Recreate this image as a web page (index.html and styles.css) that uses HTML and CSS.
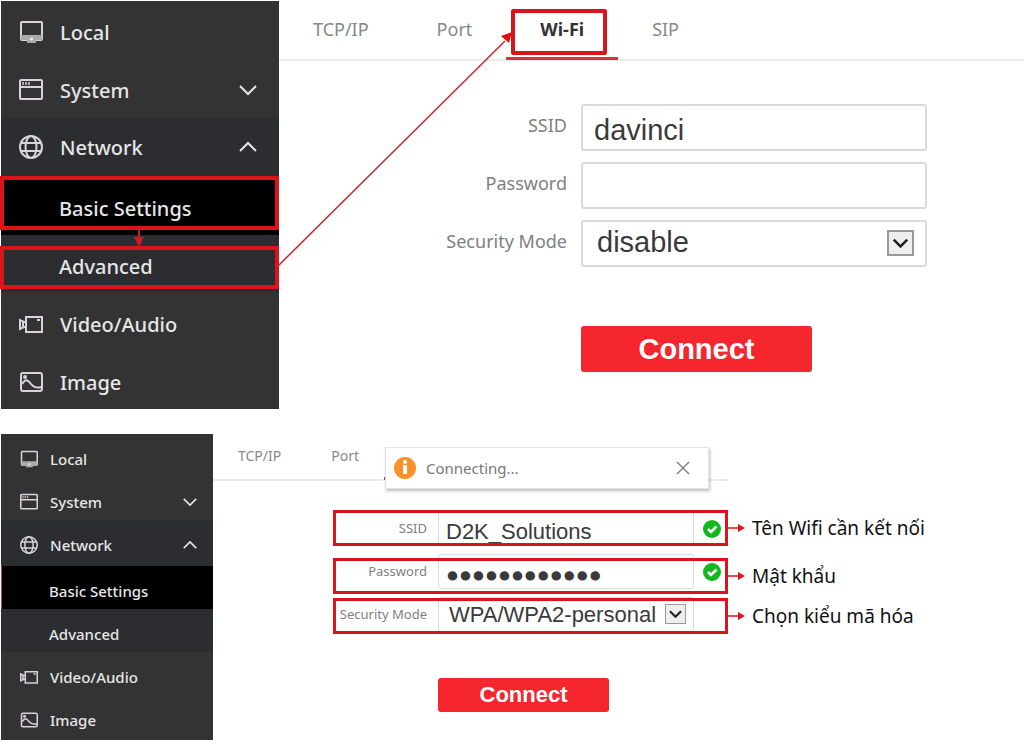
FILE: index.html
```
<!DOCTYPE html>
<html lang="vi">
<head>
    <meta charset="UTF-8">
    <title>Wi-Fi</title>
    <link rel="stylesheet" href="styles.css">
</head>
<body>
<svg class="sprite" aria-hidden="true">
    <symbol id="local" viewBox="0 0 24 24">
        <rect x="2" y="2" width="21" height="18" rx="1" fill="none" stroke="currentColor" stroke-width="2"/>
        <path d="M2 15h21v5H2zM8 20h9v3H8z" fill="#aaa"/>
        <circle cx="12.500" cy="19" r="1.500" fill="#eee"/>
    </symbol>
    <symbol id="system" viewBox="0 0 24 24">
        <rect x="1" y="2" width="22" height="19" rx="1" fill="none" stroke="currentColor" stroke-width="2"/>
        <path d="M1 9h22" stroke="currentColor" stroke-width="2"/>
        <path d="M3 5.500h8" stroke="#aaa" stroke-width="3" stroke-dasharray="2 1"/>
    </symbol>
    <symbol id="network" viewBox="0 0 24 24">
        <g fill="none" stroke="currentColor" stroke-width="2">
            <circle cx="12" cy="12" r="11"/>
            <ellipse cx="12" cy="12" rx="5.500" ry="11"/>
            <path d="M2 8h20M2 16h20"/>
        </g>
    </symbol>
    <symbol id="video" viewBox="0 0 24 24">
        <g fill="none" stroke="currentColor" stroke-width="2">
            <rect x="7" y="5" width="16" height="15"/>
            <path d="M7 10H5L1 8v9l4-2h2M4 9v7"/>
            <path d="M18 8h3"/>
        </g>
    </symbol>
    <symbol id="image" viewBox="0 0 24 24">
        <g fill="none" stroke="currentColor" stroke-width="2">
            <rect x="2" y="3" width="21" height="18" rx="2"/>
            <path d="M3 14c4-6 6-4 9 0s7 4 11 3"/>
            <circle cx="6" cy="7" r="1"/>
        </g>
    </symbol>
    <symbol id="down" viewBox="0 0 18 18">
        <path d="M1 5l8 8 8-8" fill="none" stroke="currentColor" stroke-width="2"/>
    </symbol>
    <symbol id="up" viewBox="0 0 18 18">
        <path d="M1 13l8-8 8 8" fill="none" stroke="currentColor" stroke-width="2"/>
    </symbol>
    <symbol id="drop" viewBox="0 0 26 26">
        <path d="M5 9l8 8 8-8" fill="none" stroke="#222" stroke-width="3"/>
    </symbol>
    <symbol id="ok" viewBox="0 0 18 18">
        <circle cx="9" cy="9" r="9" fill="#14b81c"/>
        <path d="M5 9l3 3 5.500-5.500" fill="none" stroke="#fff" stroke-width="2.600"/>
    </symbol>
    <symbol id="arrow" viewBox="0 0 18 10">
        <path d="M0 5h12" stroke="#d9141a" stroke-width="1.500"/>
        <path d="M11 1l7 4-7 4z" fill="#d9141a"/>
    </symbol>
</svg>

<section class="screen">
    <nav class="menu">
        <a class="item" href="#"><svg class="icon"><use href="#local"/></svg>Local</a>
        <a class="item" href="#"><svg class="icon"><use href="#system"/></svg>System<svg class="chevron"><use href="#down"/></svg></a>
        <a class="item open" href="#"><svg class="icon"><use href="#network"/></svg>Network<svg class="chevron"><use href="#up"/></svg></a>
        <a class="item sub select" href="#">Basic Settings<span class="mark mark-basic"></span></a>
        <a class="item sub" href="#">Advanced<span class="mark mark-advanced"></span></a>
        <a class="item" href="#"><svg class="icon"><use href="#video"/></svg>Video/Audio</a>
        <a class="item" href="#"><svg class="icon"><use href="#image"/></svg>Image</a>
    </nav>
    <div class="content">
        <div class="tabs">
            <a class="tab" href="#">TCP/IP</a>
            <a class="tab" href="#">Port</a>
            <a class="tab select" href="#">Wi-Fi<span class="mark mark-tab"></span></a>
            <a class="tab" href="#">SIP</a>
        </div>
        <form class="form">
            <div class="row">
                <label for="ssid">SSID</label>
                <input class="field" id="ssid" type="text" value="davinci">
            </div>
            <div class="row">
                <label for="password">Password</label>
                <input class="field" id="password" type="password">
            </div>
            <div class="row">
                <label for="mode">Security Mode</label>
                <div class="select-box">
                    <select class="field" id="mode"><option>disable</option></select>
                    <svg class="drop"><use href="#drop"/></svg>
                </div>
            </div>
            <button class="connect" type="button">Connect</button>
        </form>
    </div>
    <!-- arrows between the marked steps -->
    <svg class="steps" width="520" height="280" viewBox="0 0 520 280" aria-hidden="true">
        <path d="M138 229v10" stroke="#d9141a" stroke-width="2"/>
        <path d="M133 236h10l-5 10z" fill="#d9141a"/>
        <path d="M277 265L504 40" stroke="#c4282c" stroke-width="1.500"/>
        <path d="M511 31l-3 11-8-7z" fill="#e01014"/>
    </svg>
</section>

<section class="screen small">
    <nav class="menu">
        <a class="item" href="#"><svg class="icon"><use href="#local"/></svg>Local</a>
        <a class="item" href="#"><svg class="icon"><use href="#system"/></svg>System<svg class="chevron"><use href="#down"/></svg></a>
        <a class="item open" href="#"><svg class="icon"><use href="#network"/></svg>Network<svg class="chevron"><use href="#up"/></svg></a>
        <a class="item sub select" href="#">Basic Settings</a>
        <a class="item sub" href="#">Advanced</a>
        <a class="item" href="#"><svg class="icon"><use href="#video"/></svg>Video/Audio</a>
        <a class="item" href="#"><svg class="icon"><use href="#image"/></svg>Image</a>
    </nav>
    <div class="content">
        <div class="tabs">
            <a class="tab" href="#">TCP/IP</a>
            <a class="tab" href="#">Port</a>
            <span class="tab select empty"></span>
        </div>
        <div class="toast" role="status">
            <svg class="info" viewBox="0 0 22 22">
                <circle cx="11" cy="11" r="11" fill="#fb9128"/>
                <path d="M9 8h4v9H9z" fill="#fff"/>
                <circle cx="11" cy="5" r="2" fill="#fff"/>
            </svg>
            <span>Connecting...</span>
            <button class="close" type="button" aria-label="Close">
                <svg viewBox="0 0 14 14"><path d="M1 1l12 12M13 1L1 13" stroke="#777" stroke-width="1.300"/></svg>
            </button>
        </div>
        <form class="form">
            <div class="row">
                <label for="ssid2">SSID</label>
                <input class="field" id="ssid2" type="text" value="D2K_Solutions">
                <svg class="ok"><use href="#ok"/></svg>
                <div class="mark mark-ssid"><p class="note"><svg><use href="#arrow"/></svg>Tên Wifi cần kết nối</p></div>
            </div>
            <div class="row">
                <label for="password2">Password</label>
                <input class="field" id="password2" type="password" value="123456789012">
                <svg class="ok"><use href="#ok"/></svg>
                <div class="mark mark-password"><p class="note"><svg><use href="#arrow"/></svg>Mật khẩu</p></div>
            </div>
            <div class="row">
                <label for="mode2">Security Mode</label>
                <div class="select-box">
                    <select class="field" id="mode2"><option>WPA/WPA2-personal</option></select>
                    <svg class="drop"><use href="#drop"/></svg>
                </div>
                <div class="mark mark-mode"><p class="note"><svg><use href="#arrow"/></svg>Chọn kiểu mã hóa</p></div>
            </div>
            <button class="connect" type="button">Connect</button>
        </form>
    </div>
</section>
</body>
</html>
```
FILE: styles.css
```
* {
    margin: 0;
    padding: 0;
    box-sizing: border-box;
}

body {
    padding: 1px 0 0 1px;
    background: #fff;
    font-family: "Noto Sans", "Open Sans", sans-serif;
}

a {
    color: inherit;
    text-decoration: none;
}

.sprite {
    display: none;
}

.screen {
    display: flex;
    position: relative;
    margin-bottom: 25px;
}

.content {
    flex: 1;
    position: relative;
}

/* 左侧菜单 */
.menu {
    width: 278px;
    background: #333;
    color: #e6e6e6;
    font-size: 20px;
    font-weight: 500;
}

.item {
    display: flex;
    align-items: center;
    position: relative;
    height: 58px;
    padding: 4px 22px 0 18px;
}

.item.open {
    height: 60px;
    padding-top: 0;
    background: #2c2d31;
}

.item.sub {
    padding-left: 58px;
    background: #2c2d31;
}

.item.sub.select {
    background: #000;
}

.icon {
    width: 24px;
    height: 24px;
    margin-right: 17px;
    color: #d8d2dc;
}

.chevron {
    width: 18px;
    height: 18px;
    margin-left: auto;
}

/* 页卡 */
.tabs {
    display: flex;
    height: 60px;
    border-bottom: 2px solid #ececec;
    color: #888;
    font-size: 18px;
}

.tab {
    position: relative;
    height: 59px;
    padding: 0 34px;
    line-height: 56px;
}

.tab.select {
    border-bottom: 3px solid #d6333a;
    color: #333;
    font-weight: bold;
}

/* 表单 */
.form {
    padding: 43px 0 0 140px;
}

.row {
    display: flex;
    position: relative;
    margin-bottom: 11px;
}

.row label {
    width: 148px;
    margin-right: 14px;
    color: #808080;
    font-size: 18px;
    line-height: 42px;
    text-align: right;
}

.field {
    display: block;
    width: 346px;
    height: 47px;
    padding: 6px 11px 0;
    border: 2px solid #dadada;
    border-radius: 3px;
    background: #fff;
    color: #3a3a3a;
    font-family: "Liberation Sans", Arial, sans-serif;
    font-size: 29px;
    outline: none;
}

select.field {
    padding: 0 14px 4px;
    appearance: none;
}

.select-box {
    position: relative;
}

.drop {
    position: absolute;
    top: 10px;
    right: 13px;
    width: 27px;
    height: 26px;
    border: 2px solid #999;
    background: #eee;
    pointer-events: none;
}

.connect {
    display: block;
    width: 231px;
    height: 46px;
    margin: 59px 0 0 162px;
    border: none;
    border-radius: 3px;
    background: #f5262d;
    color: #fff;
    font-family: "Liberation Sans", Arial, sans-serif;
    font-size: 29px;
    font-weight: bold;
}

/* 红色标记框 */
.mark {
    position: absolute;
    border: 4px solid #d9141a;
    pointer-events: none;
}

.mark-basic {
    inset: -1px 0 5px -1px;
}

.mark-advanced {
    inset: 11px 0 4px -1px;
}

.mark-tab {
    inset: 8px 11px 2px 5px;
    border-radius: 2px;
}

.steps {
    position: absolute;
    top: 0;
    left: 0;
    pointer-events: none;
}

/* 小尺寸界面 */
.small {
    margin-bottom: 0;
}

.small .menu {
    width: 212px;
    padding-bottom: 2px;
    font-size: 15px;
}

.small .item {
    height: 43px;
    padding: 6px 16px 0 19px;
}

.small .item.open {
    height: 46px;
    padding-top: 4px;
}

.small .item.sub {
    padding-left: 48px;
}

.small .item.sub.select {
    border-left: 1px solid #c8474a;
    padding-left: 47px;
}

.small .icon {
    width: 18px;
    height: 18px;
    margin-right: 12px;
}

.small .chevron {
    width: 14px;
    height: 14px;
}

.small .tabs {
    width: 515px;
    height: 47px;
    font-size: 14px;
}

.small .tab {
    height: 46px;
    padding: 0 25px;
    line-height: 44px;
}

.small .tab.empty {
    width: 84px;
}

.small .form {
    padding: 30px 0 0 118px;
}

.small .row {
    margin-bottom: 8px;
}

.small .row label {
    width: 96px;
    margin-right: 11px;
    font-size: 13px;
    line-height: 35px;
}

.small .field {
    width: 256px;
    height: 35px;
    padding: 6px 7px 0;
    border-width: 1px;
    font-size: 22px;
}

.small select.field {
    padding: 0 10px;
}

.small input[type=password] {
    padding-top: 10px;
    font-family: "DejaVu Sans", sans-serif;
    -webkit-text-stroke: 3px #3a3a3a;
}

.small .drop {
    top: 7px;
    right: 8px;
    width: 21px;
    height: 20px;
    border-width: 1px;
}

.small .connect {
    width: 171px;
    height: 34px;
    margin: 46px 0 0 107px;
    font-size: 22px;
}

.ok {
    width: 18px;
    height: 18px;
    margin: 9px 0 0 9px;
}

.small .mark {
    left: 2px;
    width: 395px;
    border-width: 3px;
}

.mark-ssid {
    top: -1px;
    height: 36px;
}

.mark-password {
    top: 4px;
    height: 36px;
}

.mark-mode {
    top: 1px;
    height: 36px;
}

.note {
    display: flex;
    align-items: center;
    position: absolute;
    top: 0;
    bottom: 0;
    left: 100%;
    margin-left: 2px;
    color: #111;
    font-size: 19px;
    white-space: nowrap;
}

.note svg {
    width: 18px;
    height: 10px;
    margin-right: 7px;
}

/* 提示框 */
.toast {
    display: flex;
    align-items: center;
    position: absolute;
    top: 13px;
    left: 172px;
    width: 324px;
    height: 42px;
    padding: 0 18px 0 8px;
    border: 1px solid #e4e4e4;
    background: #fff;
    box-shadow: 1px 2px 3px rgba(0, 0, 0, .25);
    color: #777;
    font-size: 15px;
}

.info {
    width: 22px;
    height: 22px;
    margin-right: 10px;
}

.close {
    width: 14px;
    height: 14px;
    margin-left: auto;
    border: none;
    background: none;
}

.close svg {
    display: block;
}
```
